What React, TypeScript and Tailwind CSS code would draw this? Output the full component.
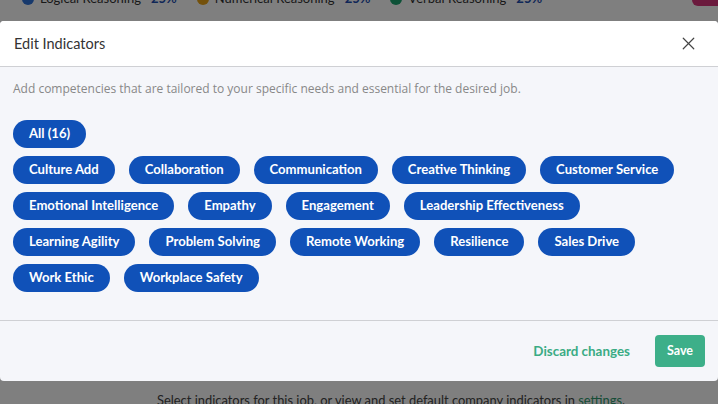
import { X } from "lucide-react";

const indicators = [
  "Culture Add",
  "Collaboration",
  "Communication",
  "Creative Thinking",
  "Customer Service",
  "Emotional Intelligence",
  "Empathy",
  "Engagement",
  "Leadership Effectiveness",
  "Learning Agility",
  "Problem Solving",
  "Remote Working",
  "Resilience",
  "Sales Drive",
  "Work Ethic",
  "Workplace Safety",
];

const weights = [
  { label: "Logical Reasoning", dot: "bg-[#2f73d9]" },
  { label: "Numerical Reasoning", dot: "bg-[#e8a317]" },
  { label: "Verbal Reasoning", dot: "bg-[#1aa36f]" },
];

function Pill({ label }: { label: string }) {
  return (
    <button
      type="button"
      className="h-[28px] rounded-full bg-[#1051b8] px-4 text-[13.1px] font-bold text-white"
    >
      {label}
    </button>
  );
}

export default function App() {
  return (
    <div className="relative h-[404px] w-[718px] overflow-hidden bg-white font-['Lato',sans-serif]">
      {/* page behind the dialog */}
      <div className="flex h-full flex-col justify-between">
        <div className="-mt-[11px] flex items-center justify-between pl-[22px]">
          <div className="flex items-center gap-[20px] text-[13px]">
            {weights.map((w) => (
              <div key={w.label} className="flex items-center gap-[6px]">
                <span className={`h-[12px] w-[12px] rounded-full ${w.dot}`} />
                <span className="text-[#333]">{w.label}</span>
                <span className="ml-[4px] font-bold text-[#1f4fb0]">25%</span>
              </div>
            ))}
          </div>
          <div className="-mt-[2px] h-[16px] w-[26px] rounded-bl-[6px] bg-[#d7347a]" />
        </div>
        <p className="-mb-[6px] pl-[157px] text-[12.9px] text-[#444]">
          Select indicators for this job, or view and set default company indicators in{" "}
          <span className="text-[#2e9a6e]">settings</span>.
        </p>
      </div>

      {/* overlay */}
      <div className="absolute inset-0 bg-black/50">
        <div className="mt-[21px] flex h-[360px] flex-col overflow-hidden rounded-[4px] bg-[#f5f6fa]">
          <div className="flex h-[46px] items-center justify-between border-b border-[#cfd0d4] bg-white pl-[14px] pr-[19px]">
            <h2 className="text-[14.5px] text-[#333]">Edit Indicators</h2>
            <X className="h-[21px] w-[21px] text-[#444]" strokeWidth={1.4} />
          </div>
          <div className="flex-1 px-[13px] pt-[13px]">
            <p className="font-['Open_Sans',sans-serif] text-[12px] text-[#888]">
              Add competencies that are tailored to your specific needs and essential for the desired job.
            </p>
            <div className="mt-[22px]">
              <Pill label="All (16)" />
            </div>
            <div className="mt-[8px] flex flex-wrap gap-x-[14px] gap-y-[8px] pr-[20px]">
              {indicators.map((i) => (
                <Pill key={i} label={i} />
              ))}
            </div>
          </div>
          <div className="flex h-[61px] items-center justify-end gap-[25px] border-t border-[#cfd0d4] pr-[13px]">
            <button type="button" className="text-[13.4px] font-bold text-[#3aab84]">
              Discard changes
            </button>
            <button
              type="button"
              className="h-[32px] rounded-[4px] bg-[#3daf89] px-[12px] text-[12.5px] font-bold text-white"
            >
              Save
            </button>
          </div>
        </div>
      </div>
    </div>
  );
}
